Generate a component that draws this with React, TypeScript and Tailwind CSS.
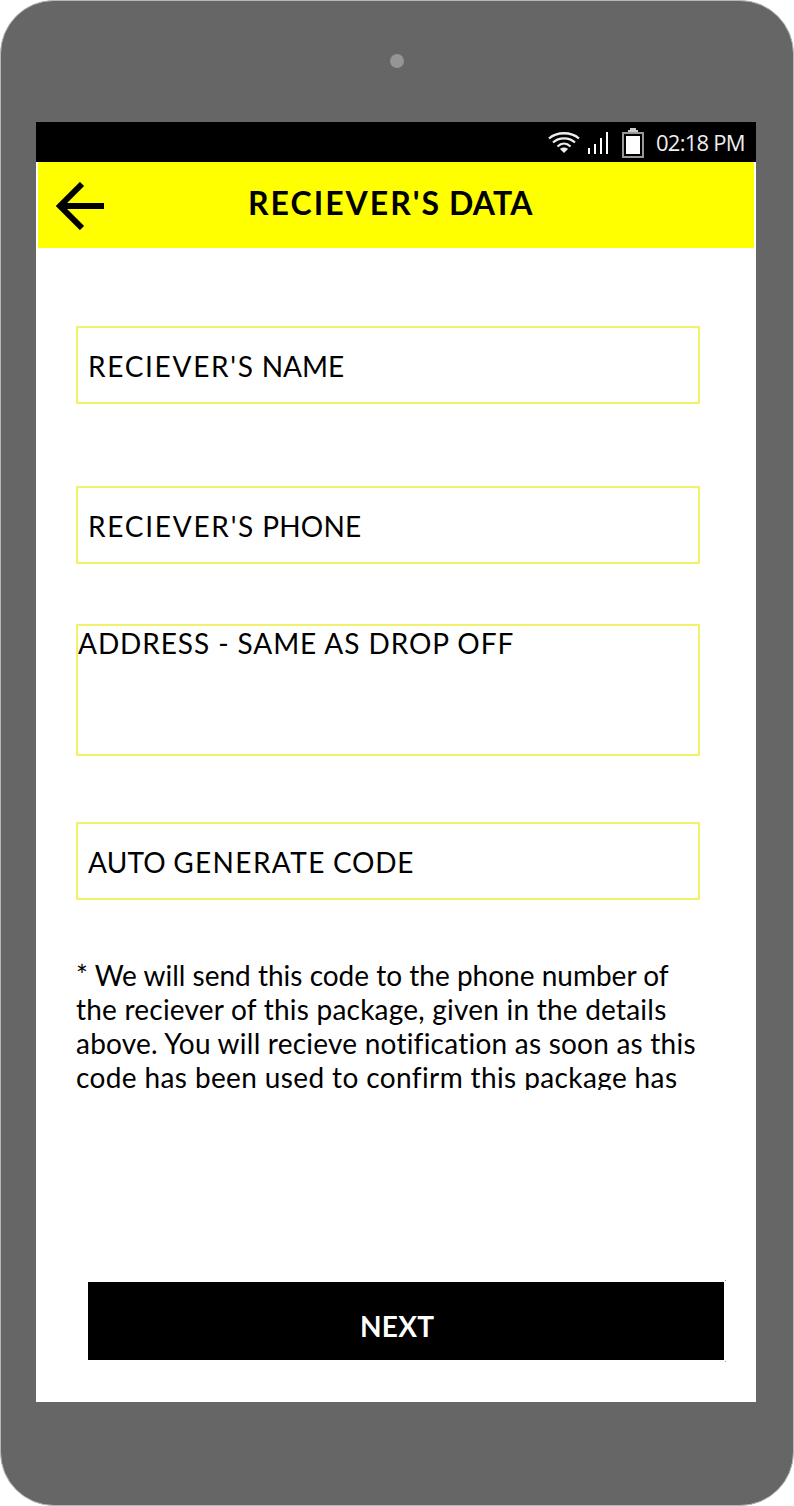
import React from "react";

function StatusBar() {
  return (
    <div className="h-10 shrink-0 bg-black flex items-center pl-[511px]">
      <svg width="34" height="24" viewBox="0 0 34 24" fill="none" stroke="#eeeeee" strokeWidth="2.3">
        <path d="M2 8.5C10 1.5 24 1.5 32 8.5M6 12.5c6-5.5 16-5.5 22 0M10.5 16.5c4-3.8 9-3.8 13 0" />
        <path d="M13 19c2-2 6-2 8 0l-4 4z" fill="#eeeeee" stroke="none" />
      </svg>
      <svg className="ml-[7px]" width="20" height="24" viewBox="0 0 20 24" fill="#fff">
        <path d="M0 18h2v6H0zM6 14h2v10H6zM12 8h2v16h-2zM18 2h2v22h-2z" />
      </svg>
      <svg className="ml-[14px] mt-[2px]" width="22" height="30" viewBox="0 0 22 30">
        <path d="M8 0h6v2h2v2H6V2h2z" fill="#ccc" />
        <path d="M1 5h20v24H1z" fill="none" stroke="#999" strokeWidth="2" />
        <path d="M4 8h14v18H4z" fill="#fff" />
      </svg>
      <span className="ml-3 whitespace-nowrap text-[22px] leading-[38px] tracking-[-0.75px] text-[#eeeeee] font-['Open_Sans',sans-serif]">
        02:18 PM
      </span>
    </div>
  );
}

function Field({ children }: { children: React.ReactNode }) {
  return (
    <div className="h-[78px] w-[624px] border-2 border-[#f1f16a] pl-[10px] leading-[77px] whitespace-nowrap">
      {children}
    </div>
  );
}

export default function App() {
  return (
    <div className="h-[1506px] w-[794px] bg-white">
      <div className="h-[1506px] w-[794px] rounded-[54px] border border-[#b5b8b6] bg-[#666666] px-[35px] flex flex-col">
        <div className="h-[121px] shrink-0 flex justify-center pt-[53.4px]">
          <div className="size-[14px] rounded-full bg-[#959595]" />
        </div>
        <div className="h-[1280px] w-[720px] bg-white flex flex-col text-black text-[28px] font-['Lato',sans-serif]">
          <StatusBar />
          <header className="mx-[2px] h-[86px] shrink-0 bg-[#ffff00] flex items-start">
            <svg className="ml-[18px] mt-5" width="48" height="48" viewBox="0 0 48 48" fill="none" stroke="#000" strokeWidth="6">
              <path d="M48 24H5M26 2L4 24l22 22" />
            </svg>
            <h1 className="ml-[144px] text-[32px] leading-[82px] font-bold whitespace-nowrap tracking-[0.2px]">
              <span className="tracking-[2px]">RECIEVER'S</span> DATA
            </h1>
          </header>
          <main className="pl-10 pt-[78px] flex flex-col">
            <Field>
              <span className="tracking-[1.7px]">RECIEVER'S</span> NAME
            </Field>
            <div className="mt-[82px]">
              <Field>
                <span className="tracking-[1.75px]">RECIEVER'S</span> <span className="tracking-[0.2px]">PHONE</span>
              </Field>
            </div>
            <div className="mt-[60px] h-[132px] w-[624px] border-2 border-[#f1f16a] leading-[34px] whitespace-nowrap tracking-[0.92px]">
              ADDRESS - SAME AS DROP OFF
            </div>
            <div className="mt-[66px]">
              <Field>
                <span className="tracking-[0.2px]">AUTO</span> <span className="tracking-[1.4px]">GENERATE</span>{" "}
                <span className="tracking-[0.8px]">CODE</span>
              </Field>
            </div>
            <div className="mt-[58px] h-[132px] overflow-hidden whitespace-nowrap leading-[34px]">
              <div>* We will send this code to the phone number of</div>
              <div className="tracking-[0.22px]">the reciever of this package, given in the details</div>
              <div className="tracking-[0.23px]">above. You will recieve notification as soon as this</div>
              <div className="tracking-[0.38px]">code has been used to confirm this package has</div>
            </div>
            <div className="relative mt-[192px] ml-3 h-[78px] w-[636px] bg-black text-white font-bold">
              <span className="block pl-[272px] leading-[88px] tracking-[0.3px]">NEXT</span>
              <i className="absolute -top-[2px] -right-[2px] size-px bg-[#999]" />
              <i className="absolute -bottom-[2px] -right-[2px] size-px bg-[#999]" />
            </div>
          </main>
        </div>
      </div>
    </div>
  );
}
